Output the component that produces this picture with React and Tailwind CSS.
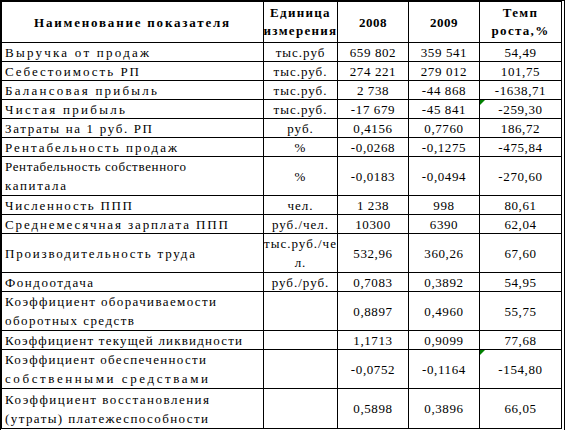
import React, { useLayoutEffect, useRef } from "react";

function Fit({ w, children, className = "" }) {
  const ref = useRef(null);
  useLayoutEffect(() => {
    const el = ref.current;
    if (!el) return;
    const apply = () => {
      el.style.letterSpacing = "0px";
      const natural = el.getBoundingClientRect().width;
      const n = String(children).length;
      if (n > 1) el.style.letterSpacing = (w - natural) / (n - 1) + "px";
    };
    apply();
    if (document.fonts && document.fonts.ready) document.fonts.ready.then(apply);
  }, [w, children]);
  return (
    <span ref={ref} className={"inline-block whitespace-nowrap " + className}>
      {children}
    </span>
  );
}

const rows = [
  { n: [["Выручка от продаж", 144]], u: "тыс.руб", a: "659 802", b: "359 541", c: "54,49" },
  { n: [["Себестоимость РП", 134]], u: "тыс.руб.", a: "274 221", b: "279 012", c: "101,75" },
  { n: [["Балансовая прибыль", 152]], u: "тыс.руб.", a: "2 738", b: "-44 868", c: "-1638,71" },
  { n: [["Чистая прибыль", 120]], u: "тыс.руб.", a: "-17 679", b: "-45 841", c: "-259,30", mark: true },
  { n: [["Затраты на 1 руб. РП", 147]], u: "руб.", a: "0,4156", b: "0,7760", c: "186,72" },
  { n: [["Рентабельность продаж", 172]], u: "%", a: "-0,0268", b: "-0,1275", c: "-475,84" },
  { n: [["Рентабельность собственного", 181], ["капитала", 61]], u: "%", a: "-0,0183", b: "-0,0494", c: "-270,60", tall: true },
  { n: [["Численность ППП", 127]], u: "чел.", a: "1 238", b: "998", c: "80,61" },
  { n: [["Среднемесячная зарплата ППП", 223]], u: "руб./чел.", a: "10300", b: "6390", c: "62,04" },
  { n: [["Производительность труда", 190]], u: ["тыс.руб./че", "л."], a: "532,96", b: "360,26", c: "67,60", tall: true },
  { n: [["Фондоотдача", 88]], u: "руб./руб.", a: "0,7083", b: "0,3892", c: "54,95" },
  { n: [["Коэффициент оборачиваемости", 211], ["оборотных средств", 129]], u: "", a: "0,8897", b: "0,4960", c: "55,75", tall: true },
  { n: [["Коэффициент текущей ликвидности", 237]], u: "", a: "1,1713", b: "0,9099", c: "77,68" },
  { n: [["Коэффициент обеспеченности", 201], ["собственными средствами", 203]], u: "", a: "-0,0752", b: "-0,1164", c: "-154,80", tall: true, mark: true },
  { n: [["Коэффициент восстановления", 204], ["(утраты) платежеспособности", 203]], u: "", a: "0,5898", b: "0,3896", c: "66,05", tall: true },
];

export default function App() {
  return (
    <div className="w-[567px] h-[430px] bg-white text-black font-['Liberation_Serif']">
      <div className="w-[565px] border-l-2 border-t-2 border-r-4 border-b-4 border-black [border-right-style:double] [border-bottom-style:double] text-[13px] leading-[19px] tracking-[0.6px]">
        <div className="grid grid-cols-[262px_74px_71px_71px_81px] h-[41px] border-b border-black font-bold">
          <div className="border-r border-black flex items-center justify-center">
            <Fit w={195}>Наименование показателя</Fit>
          </div>
          <div className="border-r border-black flex flex-col items-center justify-center text-center leading-[18px] tracking-[1.3px]">
            <span>Единица</span>
            <span>измерения</span>
          </div>
          <div className="border-r border-black flex items-center justify-center tracking-[0.5px]">2008</div>
          <div className="border-r border-black flex items-center justify-center tracking-[0.5px]">2009</div>
          <div className="flex flex-col items-center justify-center text-center leading-[18px] tracking-[1.3px]">
            <span>Темп</span>
            <span>роста,%</span>
          </div>
        </div>
        {rows.map((r, i) => (
          <div
            key={i}
            className={
              "grid grid-cols-[262px_74px_71px_71px_81px] " +
              (i < rows.length - 1 ? "border-b border-black " : "") +
              (r.tall ? "h-[39px]" : "h-[19px]")
            }
          >
            <div className="border-r border-black pl-[3px] flex flex-col items-start justify-center leading-[19px]">
              {r.n.map(([t, w], k) => (
                <Fit key={k} w={w}>
                  {t}
                </Fit>
              ))}
            </div>
            <div className="border-r border-black flex flex-col items-center justify-center text-center leading-[19px] tracking-[1px] whitespace-nowrap">
              {Array.isArray(r.u) ? r.u.map((t, k) => <span key={k}>{t}</span>) : r.u}
            </div>
            <div className="border-r border-black flex items-center justify-center">{r.a}</div>
            <div className="border-r border-black flex items-center justify-center">{r.b}</div>
            <div className="relative flex items-center justify-center">
              {r.mark && (
                <div className="absolute left-0 top-0 w-0 h-0 border-t-[5px] border-r-[5px] border-t-[#008000] border-r-transparent" />
              )}
              {r.c}
            </div>
          </div>
        ))}
      </div>
    </div>
  );
}
